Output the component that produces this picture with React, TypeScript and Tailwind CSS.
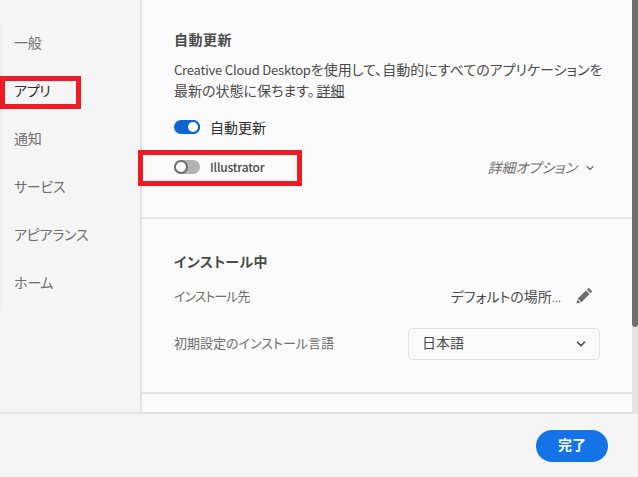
import { ChevronDown } from "lucide-react";

const navItems = ["一般", "アプリ", "通知", "サービス", "アピアランス", "ホーム"];

function Toggle({ on }: { on: boolean }) {
  return (
    <div
      className={`w-[26px] h-[14px] rounded-full relative shrink-0 ${
        on ? "bg-[#0d66d0]" : "bg-[#b3b3b3]"
      }`}
    >
      <div
        className={`absolute top-0 w-[14px] h-[14px] rounded-full bg-white border-2 ${
          on ? "left-[12px] border-[#0d66d0]" : "left-0 border-[#6e6e6e]"
        }`}
      />
    </div>
  );
}

export default function App() {
  return (
    <div className="w-[638px] h-[477px] relative overflow-hidden bg-[#f5f5f5] flex flex-col font-['Noto_Sans_CJK_JP','Noto_Sans',sans-serif] text-[#4b4b4b] [font-feature-settings:'palt']">
      <div className="h-[412px] flex shrink-0">
        {/* Sidebar */}
        <aside className="w-[140px] shrink-0 pt-[22px]">
          <ul className="border-l-2 border-[#eeeeee] h-[288px] pl-[12px]">
            {navItems.map((item) => (
              <li
                key={item}
                className={`h-[48px] pb-[8px] flex items-center text-[14px] tracking-[-0.3px] ${
                  item === "アプリ" ? "text-[#2c2c2c]" : "text-[#6e6e6e]"
                }`}
              >
                {item}
              </li>
            ))}
          </ul>
        </aside>

        {/* Settings */}
        <main className="w-[492px] bg-[#fafafa] border-l-2 border-[#e3e3e3] shrink-0">
          <section className="h-[219px] border-b-2 border-[#e3e3e3] px-[32px] pt-[29px]">
            <h2 className="text-[14px] leading-[20px] font-bold tracking-[0.5px] text-[#4b4b4b]">自動更新</h2>
            <p className="mt-[10px] text-[14px] leading-[21px] whitespace-nowrap text-[#4b4b4b]">
              <span className="text-[13px] tracking-[-0.2px]">Creative Cloud Desktop</span>を使用して、自動的にすべてのアプリケーションを
              <br />
              最新の状態に保ちます。<span className="underline ml-[2px]">詳細</span>
            </p>
            <div className="mt-[16px] flex items-center gap-[10px] h-[20px]">
              <Toggle on />
              <span className="text-[14px] text-[#2c2c2c]">自動更新</span>
            </div>
            <div className="mt-[20px] flex items-center h-[20px]">
              <Toggle on={false} />
              <span className="ml-[10px] text-[12px] font-medium tracking-[-0.2px] text-[#4b4b4b]">Illustrator</span>
              <span className="ml-auto text-[14px] italic text-[#6e6e6e]">詳細オプション</span>
              <ChevronDown className="ml-[7px] mr-[4px] mt-[2px] w-[12px] h-[12px] text-[#6e6e6e]" strokeWidth={2.5} />
            </div>
          </section>

          <section className="h-[175px] border-b-2 border-[#e3e3e3] px-[32px] pt-[32px]">
            <h2 className="text-[14px] leading-[20px] font-bold tracking-[0.4px] text-[#4b4b4b]">インストール中</h2>
            <div className="mt-[15px] flex items-center h-[20px]">
              <span className="text-[13px] tracking-[-1px] text-[#6e6e6e]">インストール先</span>
              <span className="ml-auto text-[14px] text-[#4b4b4b]">
                デフォルトの場所<span className="font-['Liberation_Sans',sans-serif] text-[11px]">...</span>
              </span>
              <svg viewBox="0 0 18 18" className="ml-[14px] mr-[7px] w-[18px] h-[18px] text-[#6e6e6e]" fill="currentColor">
                <path d="M14.2 1.3 16.7 3.8a.8.8 0 0 1 0 1.1L15.4 6.2 11.8 2.6 13.1 1.3a.8.8 0 0 1 1.1 0ZM11 3.4 14.6 7 6.4 15.2 2.8 11.6 11 3.4ZM2.3 12.5 5.5 15.7 1.5 16.6Z" />
              </svg>
            </div>
            <div className="mt-[22px] flex items-center">
              <span className="text-[13px] pb-[2px] text-[#6e6e6e]">初期設定のインストール言語</span>
              <div className="ml-auto w-[192px] h-[32px] rounded-[4px] border border-[#e3e3e3] flex items-center justify-between pl-[13px] pr-[11px]">
                <span className="text-[14px] pb-[3px] text-[#4b4b4b]">日本語</span>
                <ChevronDown className="w-[14px] h-[14px] text-[#4b4b4b]" strokeWidth={3} />
              </div>
            </div>
          </section>
        </main>

        {/* Scrollbar */}
        <div className="w-[6px] bg-[#e3e3e3] shrink-0">
          <div className="h-[327px] bg-[#6e6e6e] rounded-b-[3px]" />
        </div>
      </div>

      {/* Footer */}
      <footer className="flex-1 border-t-2 border-[#e3e3e3] flex items-start justify-end pr-[30px] pt-[16px]">
        <button className="w-[72px] h-[32px] pb-[3px] rounded-full bg-[#1473e6] text-white text-[14px] font-bold">完了</button>
      </footer>

      {/* Annotation boxes */}
      <div className="absolute left-0 top-[76px] w-[81px] h-[33px] border-[5px] border-[#ed1c24]" />
      <div className="absolute left-[138px] top-[150px] w-[164px] h-[36px] border-[5px] border-[#ed1c24]" />
    </div>
  );
}
